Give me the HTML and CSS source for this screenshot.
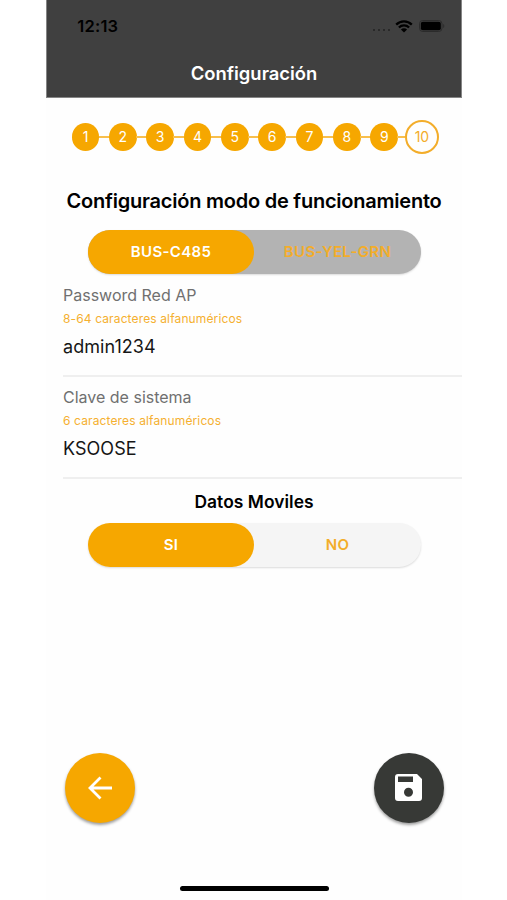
FILE: index.html
```html
<!DOCTYPE html>
<html lang="es">
<head>
<meta charset="utf-8">
<title>Configuración</title>
<link rel="stylesheet" href="styles.css">
</head>
<body>
<div class="screen">
  <header class="header">
    <div class="status">
      <span class="time">12:13</span>
      <div class="indicators">
        <span class="signal"><i></i><i></i><i></i><i></i></span>
        <svg class="wifi" viewBox="0 0 18 13"><path d="M1.2 4.6a11.1 11.1 0 0 1 15.6 0M3.9 7.5a7.2 7.2 0 0 1 10.2 0" fill="none" stroke="#000" stroke-width="2.3"/><path d="M9 12.6 5.9 9.5a4.4 4.4 0 0 1 6.2 0z"/></svg>
        <svg class="battery" viewBox="0 0 26 12"><rect x=".5" y=".5" width="22.5" height="11" rx="3.3" fill="none" stroke="#2b2b2b"/><rect x="1.8" y="1.8" width="20" height="8.4" rx="2"/><path d="M24.2 4v4c1.5-.7 1.5-3.3 0-4z" fill="#2b2b2b"/></svg>
      </div>
    </div>
    <h1 class="title">Configuración</h1>
  </header>
  <main class="content">
    <ol class="steps">
      <li class="step">1</li><li class="step">2</li><li class="step">3</li><li class="step">4</li><li class="step">5</li><li class="step">6</li><li class="step">7</li><li class="step">8</li><li class="step">9</li><li class="step current">10</li>
    </ol>
    <h2 class="heading">Configuración modo de funcionamiento</h2>
    <div class="switch muted">
      <button class="option selected">BUS-C485</button>
      <button class="option">BUS-YEL-GRN</button>
    </div>
    <section class="field first">
      <div class="label">Password Red AP</div>
      <div class="hint">8-64 caracteres alfanuméricos</div>
      <div class="value">admin1234</div>
    </section>
    <section class="field">
      <div class="label">Clave de sistema</div>
      <div class="hint">6 caracteres alfanuméricos</div>
      <div class="value">KSOOSE</div>
    </section>
    <h3 class="subheading">Datos Moviles</h3>
    <div class="switch">
      <button class="option selected">SI</button>
      <button class="option">NO</button>
    </div>
  </main>
  <footer class="actions">
    <button class="fab back" aria-label="Atrás"><svg width="26" height="24" viewBox="0 0 26 24"><path d="M25 12H3M13.5 1.5 3 12 13.5 22.5" fill="none" stroke="#fff" stroke-width="2.8"/></svg></button>
    <button class="fab save" aria-label="Guardar"><svg width="27" height="27" viewBox="0 0 27 27"><path fill="#fff" fill-rule="evenodd" d="M3 0h19l5 5v19a3 3 0 0 1-3 3H3a3 3 0 0 1-3-3V3a3 3 0 0 1 3-3zM3 2.5v5.500h15V2.500zM13.500 13.800a4.500 4.500 0 1 0 0 9 4.500 4.500 0 0 0 0-9z"/></svg></button>
  </footer>
  <div class="home-bar"></div>
</div>
</body>
</html>
```
FILE: styles.css
```css
* { box-sizing: border-box; }
body { margin: 0; background: #fff; font-family: Inter, "Liberation Sans", sans-serif; color: #000; }
h1, h2, h3, ol { margin: 0; padding: 0; }
button { border: 0; padding: 0; font-family: inherit; background: none; }
svg { display: block; }

.screen { width: 415.5px; height: 900px; margin-left: 46.3px; display: flex; flex-direction: column; background: #fefefe; }

.header { height: 98px; background: #404040; border: 1px solid #858585; border-top: 0; flex: none; }
.status { height: 52px; padding: 0 15.5px 0 30px; display: flex; align-items: center; justify-content: space-between; }
.time { font-size: 16.5px; font-weight: 600; line-height: 20px; letter-spacing: .2px; }
.indicators { display: flex; align-items: center; }
.signal { display: flex; gap: 3px; margin: 8px 5px 0 0; }
.signal i { width: 2px; height: 2px; border-radius: 50%; background: #222; }
.wifi { width: 18px; height: 13px; margin-right: 6px; }
.battery { width: 26px; height: 12px; }
.title { font-size: 18.4px; font-weight: 600; line-height: 24px; margin-top: 9px; text-align: center; color: #fff; }

.content { flex: none; display: flex; flex-direction: column; }
.steps { display: flex; align-items: center; height: 34px; margin: 22px 0 0 25.4px; list-style: none; }
.step { flex: none; width: 27.6px; height: 27.6px; border-radius: 50%; background: #f6a700; color: #fff; font-size: 14px; line-height: 28px; text-align: center; position: relative; margin-right: 9.75px; }
.step:not(.current)::after { content: ""; position: absolute; left: 27px; top: 13px; width: 10.5px; height: 1.5px; background: #f8bf4d; }
.step:nth-child(9)::after { width: 8px; }
.current { width: 34px; height: 34px; margin: 0 0 0 -2.9px; line-height: 29.5px; border: 2px solid #f3ad2a; background: #fefefe; color: #f3ad2a; }

.heading { margin-top: 31px; font-size: 20px; font-weight: 600; line-height: 32px; letter-spacing: -.23px; text-align: center; white-space: nowrap; }
.switch { width: 333px; height: 44px; margin: 12.5px 0 0 41.5px; display: flex; border-radius: 22px; background: #f5f5f5; box-shadow: 0 1px 2px rgba(0,0,0,.14); }
.muted { background: #b3b3b3; }
.option { flex: 1; height: 44px; border-radius: 22px; color: #f3ad2a; font-size: 15px; font-weight: 600; letter-spacing: .35px; }
.selected { background: #f6a700; color: #fff; }

.field { height: 102px; margin-left: 16.7px; border-bottom: 2px solid #efefef; padding-top: 8px; }
.first { margin-top: 1px; }
.label { font-size: 16px; line-height: 24px; color: #707070; }
.hint { font-size: 12px; line-height: 18px; margin-top: 3px; color: #f5b030; letter-spacing: .13px; }
.value { font-size: 18px; line-height: 26px; margin-top: 6.5px; color: #161616; letter-spacing: .05px; }
.subheading { margin-top: 11px; font-size: 17.4px; font-weight: 600; line-height: 24px; letter-spacing: .05px; text-align: center; }
.subheading + .switch { margin-top: 9px; }

.actions { margin-top: 186px; padding: 0 18px 0 18.7px; display: flex; justify-content: space-between; flex: none; }
.fab { width: 70px; height: 70px; border-radius: 50%; display: flex; align-items: center; justify-content: center; box-shadow: 0 2px 3px rgba(0,0,0,.38); }
.back { background: #f6a700; }
.save { background: #373936; }
.home-bar { width: 149px; height: 5px; border-radius: 3px; background: #000; margin: 63px auto 0; }
```
